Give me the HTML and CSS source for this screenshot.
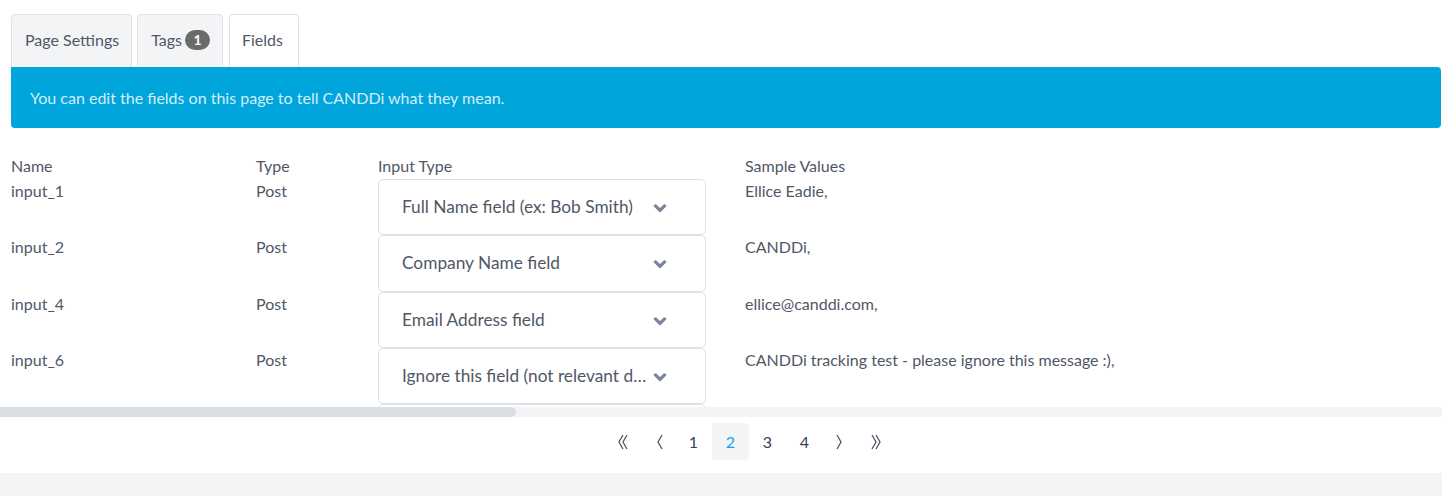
FILE: index.html
```html
<!DOCTYPE html>
<html lang="en">
<head>
<meta charset="UTF-8">
<title>Fields</title>
<link rel="stylesheet" href="styles.css">
</head>
<body>

<!-- tabs -->
<nav class="tabs">
  <a class="tab">Page Settings</a>
  <a class="tab">Tags <span class="badge">1</span></a>
  <a class="tab active">Fields</a>
</nav>

<div class="alert">You can edit the fields on this page to tell CANDDi what they mean.</div>

<!-- fields table -->
<div class="scroller">
  <table class="fields">
    <thead>
      <tr><th class="c-name">Name</th><th class="c-type">Type</th><th class="c-input">Input Type</th><th>Sample Values</th></tr>
    </thead>
    <tbody>
      <tr>
        <td class="c-name">input_1</td><td>Post</td>
        <td><div class="select"><span>Full Name field (ex: Bob Smith)</span><svg viewBox="0 0 10 7"><path d="M1.5 1.5 5 5l3.5-3.5"/></svg></div></td>
        <td>Ellice Eadie,</td>
      </tr>
      <tr>
        <td class="c-name">input_2</td><td>Post</td>
        <td><div class="select"><span>Company Name field</span><svg viewBox="0 0 10 7"><path d="M1.5 1.5 5 5l3.5-3.5"/></svg></div></td>
        <td>CANDDi,</td>
      </tr>
      <tr>
        <td class="c-name">input_4</td><td>Post</td>
        <td><div class="select"><span>Email Address field</span><svg viewBox="0 0 10 7"><path d="M1.5 1.5 5 5l3.5-3.5"/></svg></div></td>
        <td>ellice@canddi.com,</td>
      </tr>
      <tr>
        <td class="c-name">input_6</td><td>Post</td>
        <td><div class="select"><span>Ignore this field (not relevant data)</span><svg viewBox="0 0 10 7"><path d="M1.5 1.5 5 5l3.5-3.5"/></svg></div></td>
        <td>CANDDi tracking test - please ignore this message :),</td>
      </tr>
      <tr>
        <td class="c-name"></td><td></td>
        <td><div class="select"></div></td>
        <td></td>
      </tr>
    </tbody>
  </table>
</div>
<div class="hbar"><div class="thumb"></div></div>

<!-- pager -->
<div class="pager">
  <a class="pg back"><svg viewBox="0 0 12 20"><path d="M6 3 2 10l4 7M10 3 6 10l4 7"/></svg></a>
  <a class="pg back"><svg viewBox="0 0 12 20"><path d="M8 3 4 10l4 7"/></svg></a>
  <a class="pg">1</a>
  <a class="pg on">2</a>
  <a class="pg">3</a>
  <a class="pg">4</a>
  <a class="pg fwd"><svg viewBox="0 0 12 20"><path d="M4 3l4 7-4 7"/></svg></a>
  <a class="pg fwd"><svg viewBox="0 0 12 20"><path d="M2 3l4 7-4 7M6 3l4 7-4 7"/></svg></a>
</div>
<div class="foot"></div>

</body>
</html>
```

FILE: styles.css
```css
/* ===== global ===== */
html,body{margin:0}
body{background:#fff;color:#4f5866;font-family:"Source Sans Pro",Lato,"Liberation Sans",sans-serif;font-size:16px;line-height:20px}

/* ---------- tabs ---------- */
.tabs{display:flex;gap:5px;padding:14px 0 0 11px}
.tab{display:flex;align-items:center;gap:3px;height:53px;padding:0 12px 3px 13px;box-sizing:border-box;
     background:#f3f4f6;border:1px solid #dfe2e6;border-bottom:none;border-radius:4px 4px 0 0;color:#4f5866}
.tab.active{background:#fff;padding:0 15px 3px 12px;margin-left:1px}
.badge{display:inline-flex;align-items:center;justify-content:center;width:25px;height:20px;border-radius:10px;
       background:#6b6b6b;color:#fff;font-weight:700;font-size:14px}

/* ---------- alert ---------- */
.alert{margin:0 1px 0 11px;height:61px;padding:0 19px;display:flex;align-items:center;
       background:#00a5dc;color:#d3eef9;border-radius:0 4px 4px 4px;font-size:16px}

/* ---------- table ---------- */
.scroller{margin-top:24px;height:255px;overflow:hidden}
.fields{border-collapse:collapse;width:4020px}
.fields th{font-weight:400;text-align:left;padding:4px 0 0;height:23px;vertical-align:top}
.fields td{padding:0;vertical-align:top}
.fields td:not(:nth-child(3)){padding-top:2px}
.c-name{width:245px;padding-left:11px !important}
.fields th.c-type,.fields tr td:nth-child(2){width:122px}
.fields th.c-input,.fields tr td:nth-child(3){width:367px}

.select{box-sizing:border-box;width:328px;height:56.25px;border:1px solid #dde1e5;border-radius:5px;
        display:flex;align-items:center;padding:0 56px 0 23px;position:relative;background:#fff;font-size:17.3px}
.select span{white-space:nowrap;overflow:hidden;text-overflow:ellipsis;flex:1}
.select svg{position:absolute;right:38px;top:50%;margin-top:-3px;width:14px;height:9px;fill:none;stroke:#7b869a;stroke-width:2.6;stroke-linecap:round;stroke-linejoin:round}

/* fake horizontal scrollbar */
.hbar{height:10px;background:#f3f4f6}
.thumb{width:516px;height:10px;background:#dcdfe2;border-radius:0 5px 5px 0}

/* ---------- pager ---------- */
.pager{display:flex;justify-content:center;align-items:flex-start;height:50px;padding:6px 0 0 56px}
.pg{width:37px;height:37px;display:flex;align-items:center;justify-content:center;border-radius:4px;color:#374151}
.pg.on{background:#f3f4f6;color:#0ea5e9}
.pg svg{width:12px;height:20px;fill:none;stroke:#4b5563;stroke-width:1.3}
.pg.back svg{margin-left:6px}
.pg.fwd svg{margin-right:6px}
.foot{height:23px;background:#f3f4f6}
```
